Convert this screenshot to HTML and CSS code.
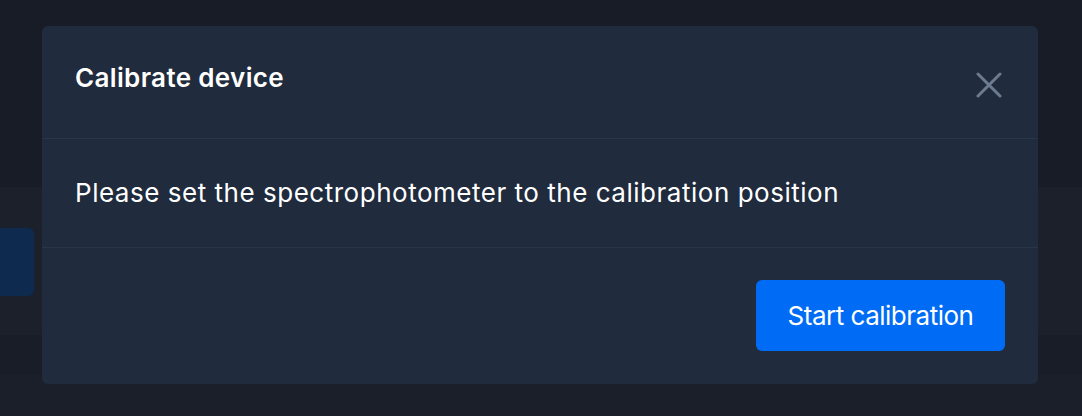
FILE: index.html
```html
<!DOCTYPE html>
<html lang="en">
<head>
    <meta charset="UTF-8">
    <meta name="viewport" content="width=device-width, initial-scale=1.0">
    <title>Calibrate device</title>
    <link rel="stylesheet" href="styles.css">
</head>
<body>
    <div class="page">
        <div class="band band-top"></div>
        <div class="band band-mid">
            <div class="side-card"></div>
        </div>
        <div class="band band-low"></div>
        <div class="band band-foot"></div>
    </div>

    <div class="modal" role="dialog" aria-labelledby="modalTitle">
        <div class="modal-header">
            <h2 id="modalTitle">Calibrate device</h2>
            <button class="close" aria-label="Close">
                <svg width="26" height="26" viewBox="0 0 26 26">
                    <path d="M2 2 L24 24 M24 2 L2 24" stroke="#6c7b90" stroke-width="3" stroke-linecap="round"/>
                </svg>
            </button>
        </div>
        <div class="modal-body">
            <p>Please set the spectrophotometer to the calibration position</p>
        </div>
        <div class="modal-footer">
            <button class="primary">Start calibration</button>
        </div>
    </div>
</body>
</html>
```

FILE: styles.css
```css
* {
    margin: 0;
    padding: 0;
    box-sizing: border-box;
}

body {
    font-family: Inter, "Noto Sans", sans-serif;
    background-color: #1b1f2a;
    color: #ffffff;
    height: 416px;
    overflow: hidden;
}

.page {
    display: flex;
    flex-direction: column;
    height: 416px;
}

.band-top {
    height: 187px;
    background: #181c27;
}

.band-mid {
    height: 148px;
    background: #1b202b;
    padding-top: 41px;
}

.side-card {
    width: 34px;
    height: 68px;
    background: #0f2a4f;
    border-radius: 0 6px 6px 0;
}

.band-low {
    height: 40px;
    background: #191d28;
}

.band-foot {
    flex: 1;
    background: #1b1f2a;
}

.modal {
    position: absolute;
    left: 42px;
    top: 26px;
    width: 996px;
    background: #202b3d;
    border-radius: 6px;
}

.modal-header {
    display: flex;
    justify-content: space-between;
    align-items: flex-start;
    height: 113px;
    padding: 36px 32px 0 33px;
    border-bottom: 1px solid #28354b;
}

.modal-header h2 {
    font-size: 26px;
    font-weight: 600;
    line-height: 32px;
    letter-spacing: 0.35px;
}

.close {
    background: none;
    border: none;
    width: 26px;
    height: 26px;
    margin-top: 10px;
    margin-right: 4px;
}

.modal-body {
    height: 109px;
    padding: 0 33px;
    display: flex;
    align-items: center;
    border-bottom: 1px solid #28354b;
}

.modal-body p {
    font-size: 26px;
    line-height: 32px;
    letter-spacing: 0.52px;
}

.modal-footer {
    display: flex;
    justify-content: flex-end;
    padding: 32px 33px 33px;
}

.primary {
    width: 249px;
    height: 71px;
    background: #006cf5;
    color: #ffffff;
    border: none;
    border-radius: 6px;
    font-family: inherit;
    font-size: 26px;
    letter-spacing: -0.5px;
}
```
